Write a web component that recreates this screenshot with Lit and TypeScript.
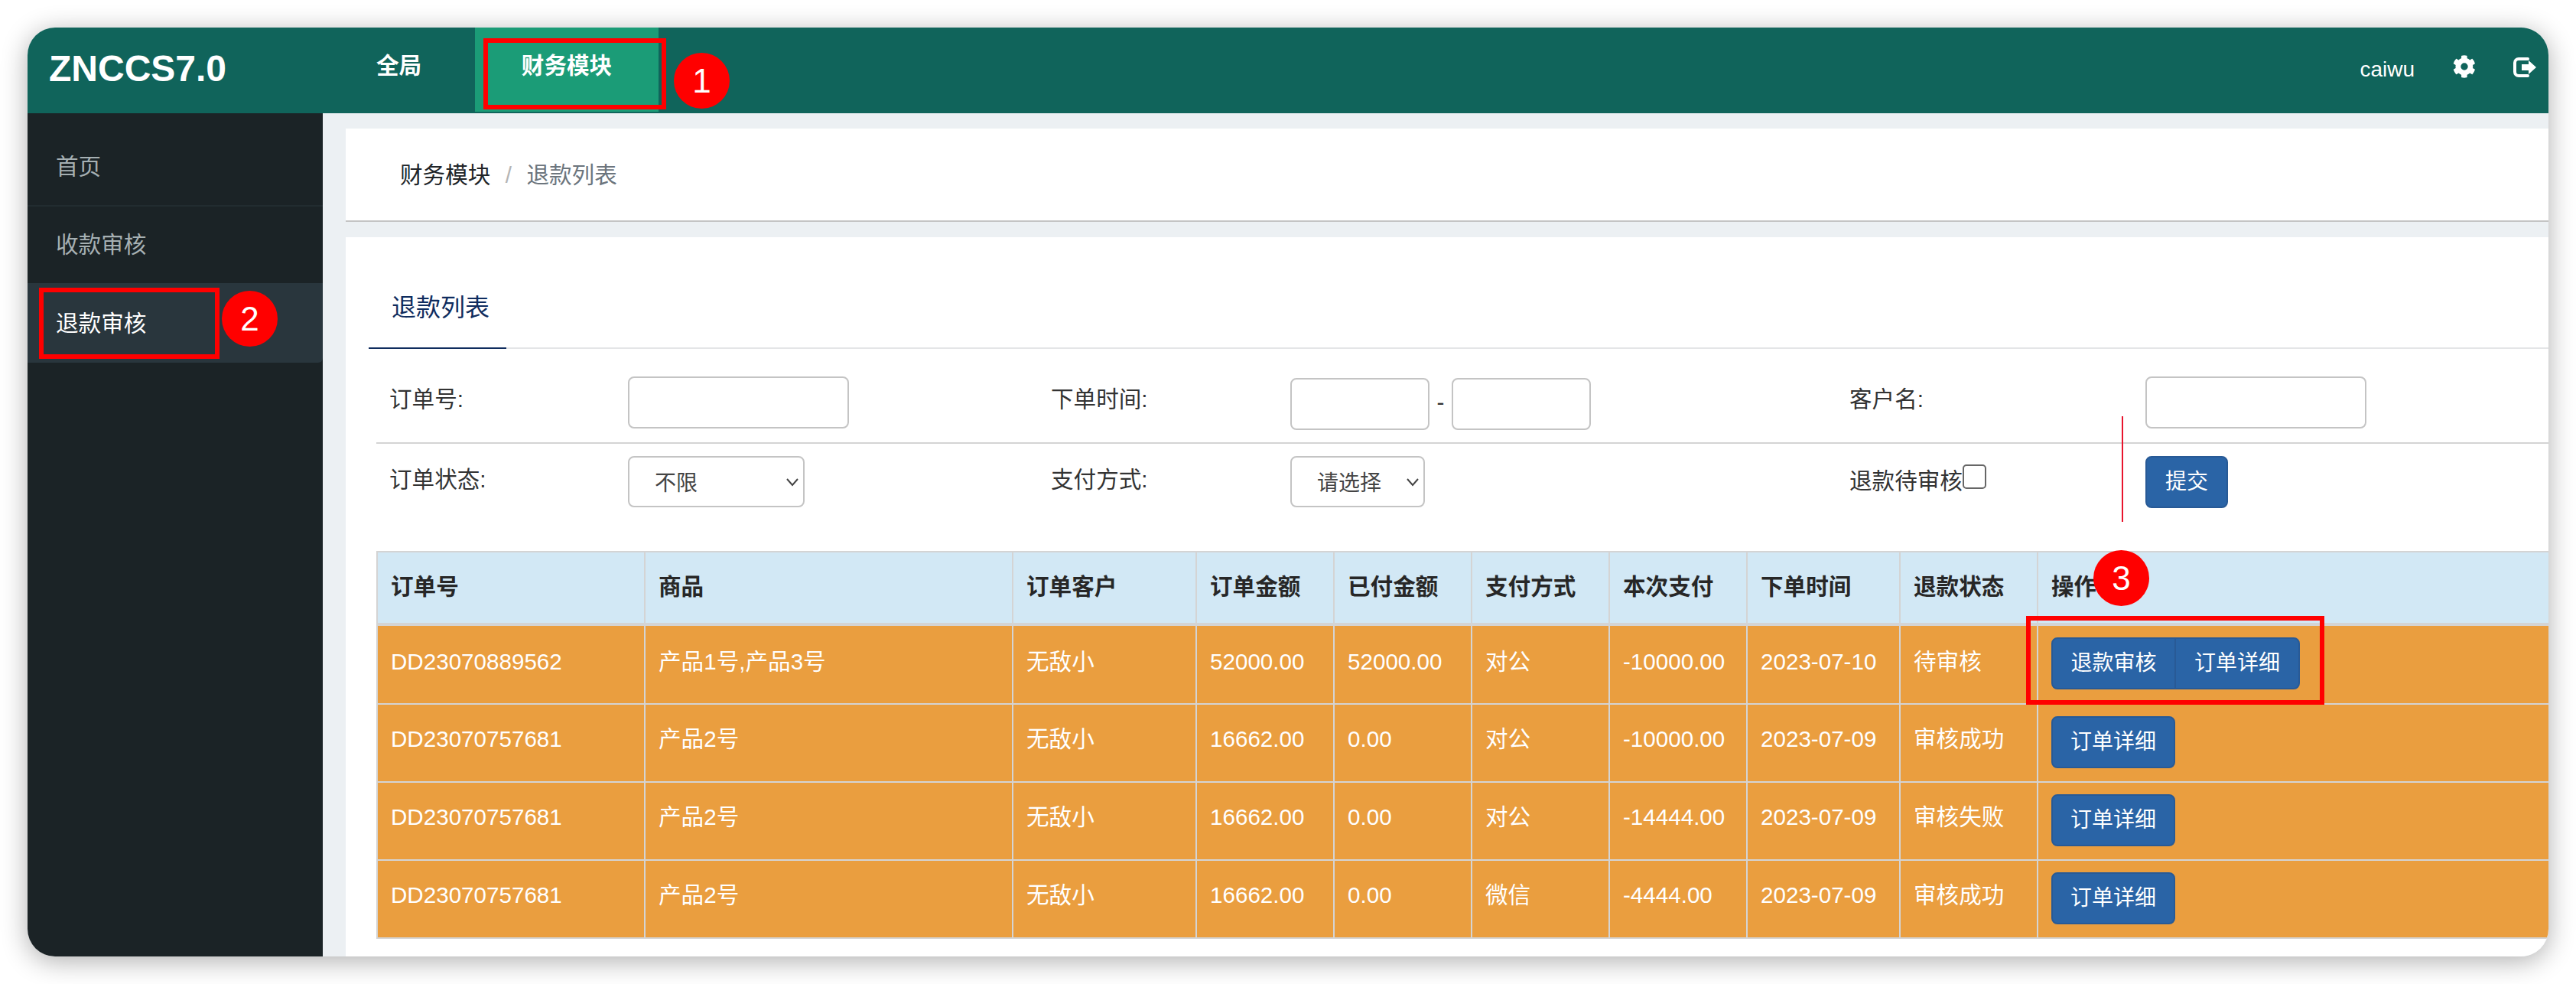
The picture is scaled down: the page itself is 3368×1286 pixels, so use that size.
import { html, LitElement, css } from "lit";
import { customElement } from "lit/decorators.js";

const rows = [
  { id: "DD23070889562", goods: "产品1号,产品3号", total: "52000.00", paid: "52000.00", way: "对公", cur: "-10000.00", date: "2023-07-10", status: "待审核", audit: true },
  { id: "DD23070757681", goods: "产品2号", total: "16662.00", paid: "0.00", way: "对公", cur: "-10000.00", date: "2023-07-09", status: "审核成功", audit: false },
  { id: "DD23070757681", goods: "产品2号", total: "16662.00", paid: "0.00", way: "对公", cur: "-14444.00", date: "2023-07-09", status: "审核失败", audit: false },
  { id: "DD23070757681", goods: "产品2号", total: "16662.00", paid: "0.00", way: "微信", cur: "-4444.00", date: "2023-07-09", status: "审核成功", audit: false },
];

const heads = ["订单号", "商品", "订单客户", "订单金额", "已付金额", "支付方式", "本次支付", "下单时间", "退款状态", "操作"];

@customElement("app-root")
export class App extends LitElement {
  static styles = css`
    :host {
      display: block;
      width: 3368px;
      height: 1286px;
      background: #fff;
      font-family: "Liberation Sans", "Noto Sans CJK SC", sans-serif;
      font-size: 29.6px;
      color: #333;
      position: relative;
      overflow: hidden;
    }

    .shell {
      padding: 36px;
      box-sizing: border-box;
      height: 1286px;
    }

    .window {
      height: 1214px;
      border-radius: 36px;
      box-shadow: 0 6px 34px rgba(0, 0, 0, 0.32);
      overflow: hidden;
      display: flex;
      flex-direction: column;
      background: #ecf0f3;
    }

    .top {
      height: 112px;
      flex: none;
      background: #10645b;
      display: flex;
      color: #fff;
    }

    .logo {
      width: 456px;
      box-sizing: border-box;
      padding: 25px 0 0 28px;
      font-size: 48px;
      font-weight: 700;
      line-height: 58px;
    }

    .tab {
      height: 110px;
      width: 240px;
      box-sizing: border-box;
      text-align: center;
      font-weight: 700;
      line-height: 100px;
    }

    .tab.first {
      width: 129px;
      text-align: left;
    }

    .tab.on {
      background: #1b9c77;
    }

    .user {
      margin-left: auto;
      display: flex;
      align-items: center;
      height: 110px;
      padding-right: 16px;
    }

    .user span {
      font-size: 28px;
      margin-right: 50px;
    }

    .user svg {
      display: block;
    }

    .gear {
      width: 30px;
      height: 30px;
      margin-right: 49px;
      margin-top: -8px;
      fill: #fff;
    }

    .exit {
      width: 30px;
      height: 26px;
      margin-top: -7px;
    }

    .body {
      flex: 1;
      display: flex;
      min-height: 0;
    }

    .side {
      width: 386px;
      flex: none;
      background: #1b2326;
      color: #a6b0b3;
    }

    .side div {
      height: 120px;
      line-height: 140px;
      padding-left: 37px;
      border-bottom: 2px solid #222c30;
    }

    .side div:nth-child(2) {
      height: 100px;
      line-height: 100px;
      border-bottom: 0;
    }

    .side div.on {
      height: 104px;
      line-height: 106px;
      background: #29363d;
      color: #fff;
      border-bottom: 0;
      border-radius: 0 0 6px 0;
    }

    main {
      flex: 1;
      min-width: 0;
      padding: 20px 0 0 30px;
      display: flex;
      flex-direction: column;
      gap: 20px;
    }

    .crumb {
      height: 120px;
      flex: none;
      background: #fff;
      border-bottom: 2px solid #c4c4c4;
      padding-left: 71px;
      line-height: 122px;
      display: flex;
      color: #6c757d;
    }

    .crumb b {
      font-weight: 400;
      color: #212529;
    }

    .crumb i {
      font-style: normal;
      color: #b5b5b5;
      width: 47px;
      text-align: center;
    }

    .card {
      flex: 1;
      background: #fff;
      min-height: 0;
      overflow: hidden;
      padding-left: 30px;
    }

    .tabs {
      height: 146px;
      box-sizing: border-box;
      border-bottom: 2px solid #e4e5e7;
      display: flex;
      align-items: flex-end;
    }

    .tabs span {
      width: 180px;
      box-sizing: border-box;
      height: 146px;
      margin-bottom: -2px;
      border-bottom: 2px solid #0f2c5e;
      color: #0f2c5e;
      font-size: 32px;
      padding: 70px 0 0 30px;
      line-height: 44px;
    }

    .filters {
      margin-left: 10px;
      display: grid;
      grid-template-columns: 329px 553px 313px 731px 387px 1fr;
      grid-template-rows: 124px 140px;
    }

    .cell {
      padding-top: 46px;
      line-height: 40px;
      border-bottom: 2px solid #d4d4d4;
      box-sizing: border-box;
      white-space: nowrap;
    }

    .cell.first {
      padding-left: 17px;
    }

    .cell.box {
      padding-top: 36px;
      display: flex;
      align-items: flex-start;
    }

    .low {
      border-bottom: 0;
      padding-top: 27px;
    }

    .cell.box.low {
      padding-top: 16px;
    }

    .check {
      display: inline-flex;
      align-items: flex-start;
      padding-top: 2px;
    }

    .check em {
      display: block;
      width: 31px;
      height: 32px;
      box-sizing: border-box;
      border: 2px solid #666;
      border-radius: 5px;
      margin-top: -2px;
      background: #fff;
    }

    .input {
      width: 289px;
      height: 68px;
      box-sizing: border-box;
      border: 2px solid #c4c4c4;
      border-radius: 8px;
      background: #fff;
    }

    .input.date {
      width: 182px;
      margin-top: 2px;
    }

    .dash {
      width: 29px;
      text-align: center;
      line-height: 68px;
    }

    .pick {
      height: 67px;
      box-sizing: border-box;
      border: 2px solid #c4c4c4;
      border-radius: 8px;
      padding-left: 33px;
      font-size: 28px;
      line-height: 67px;
      color: #444;
      position: relative;
    }

    .pick svg {
      position: absolute;
      top: 26px;
      right: 5px;
      width: 18px;
      height: 12px;
      fill: none;
      stroke: #444;
      stroke-width: 2;
    }

    .pick.state {
      width: 231px;
    }

    .pick.way {
      width: 176px;
    }

    .btn {
      display: inline-block;
      height: 68px;
      box-sizing: border-box;
      background: #2a64a6;
      border: 2px solid #285a96;
      border-radius: 8px;
      color: #fff;
      font-size: 28px;
      line-height: 64px;
      text-align: center;
      vertical-align: top;
    }

    .submit {
      width: 108px;
    }

    table {
      margin-left: 10px;
      border-collapse: collapse;
      table-layout: fixed;
      width: 2900px;
    }

    th,
    td {
      border: 2px solid #d4d4d4;
      padding: 0 0 0 17px;
      text-align: left;
      vertical-align: top;
      white-space: nowrap;
      box-sizing: border-box;
    }

    th {
      background: #d2e8f5;
      border-bottom-width: 4px;
      height: 95px;
      font-weight: 700;
      line-height: 90px;
      color: #272727;
    }

    td {
      background: #ea9e3f;
      color: #fff;
      height: 102px;
      line-height: 44px;
      padding-top: 23px;
    }

    tbody tr:first-child td {
      height: 104px;
      padding-top: 25px;
    }

    td.ops,
    tbody tr:first-child td.ops {
      padding-top: 15px;
      line-height: 0;
    }

    .group {
      display: inline-flex;
    }

    .group .btn:first-child {
      width: 162px;
      border-radius: 8px 0 0 8px;
      border-right: 1px solid #285a96;
    }

    .group .btn:last-child {
      width: 163px;
      border-radius: 0 8px 8px 0;
      border-left: 1px solid #285a96;
    }

    .detail {
      width: 162px;
    }

    .divider {
      position: absolute;
      left: 2774px;
      top: 544px;
      width: 2px;
      height: 138px;
      background: #e8142c;
    }

    .mark {
      position: absolute;
      box-sizing: border-box;
      border: 6px solid #f00;
    }

    .pin {
      position: absolute;
      width: 73px;
      height: 73px;
      border-radius: 50%;
      background: #f00;
      color: #fff;
      font-size: 44px;
      line-height: 73px;
      text-align: center;
    }
  `;

  render() {
    return html`
      <div class="shell">
        <div class="window">
          <header class="top">
            <div class="logo">ZNCCS7.0</div>
            <div class="tab first">全局</div>
            <div class="tab on">财务模块</div>
            <div class="user">
              <span>caiwu</span>
              <svg class="gear" viewBox="0 0 512 512"><path d="M487 316l-43-25a196 196 0 0 0 0-70l43-25c5-3 7-9 5-14a252 252 0 0 0-55-96c-4-4-10-5-15-2l-43 25a193 193 0 0 0-61-35V24c0-6-4-10-9-12a254 254 0 0 0-111 0c-5 1-9 6-9 12v50a199 199 0 0 0-61 35L85 84c-5-3-11-2-15 2a250 250 0 0 0-55 96c-2 5 0 11 5 14l43 25a196 196 0 0 0 0 70l-43 25c-5 3-7 9-5 14a252 252 0 0 0 55 96c4 4 10 5 15 2l43-25a193 193 0 0 0 61 35v50c0 6 4 10 9 12a254 254 0 0 0 111 0c5-1 9-6 9-12v-50a199 199 0 0 0 61-35l43 25c5 3 11 2 15-2a250 250 0 0 0 55-96c2-5 0-11-5-14zM256 336a80 80 0 1 1 0-160 80 80 0 0 1 0 160z"/></svg>
              <svg class="exit" viewBox="0 0 30 26"><path d="M19 2H7a5 5 0 0 0-5 5v12a5 5 0 0 0 5 5h12" fill="none" stroke="#fff" stroke-width="4" stroke-linecap="round"/><path d="M11 9h9V4l10 9-10 9v-5h-9z" fill="#fff"/></svg>
            </div>
          </header>
          <div class="body">
            <nav class="side">
              <div>首页</div>
              <div>收款审核</div>
              <div class="on">退款审核</div>
            </nav>
            <main>
              <div class="crumb"><b>财务模块</b><i>/</i><span>退款列表</span></div>
              <section class="card">
                <div class="tabs"><span>退款列表</span></div>
                <div class="filters">
                  <div class="cell first">订单号:</div>
                  <div class="cell box"><div class="input"></div></div>
                  <div class="cell">下单时间:</div>
                  <div class="cell box"><div class="input date"></div><div class="dash">-</div><div class="input date"></div></div>
                  <div class="cell">客户名:</div>
                  <div class="cell box"><div class="input"></div></div>
                  <div class="cell first low">订单状态:</div>
                  <div class="cell box low">
                    <div class="pick state">不限<svg viewBox="0 0 18 12"><path d="M2 2l7 8 7-8"/></svg></div>
                  </div>
                  <div class="cell low">支付方式:</div>
                  <div class="cell box low">
                    <div class="pick way">请选择<svg viewBox="0 0 18 12"><path d="M2 2l7 8 7-8"/></svg></div>
                  </div>
                  <div class="cell low"><span class="check">退款待审核<em></em></span></div>
                  <div class="cell box low"><span class="btn submit">提交</span></div>
                </div>
                <table>
                  <colgroup>
                    <col style="width:350px" /><col style="width:481px" /><col style="width:240px" />
                    <col style="width:180px" /><col style="width:180px" /><col style="width:180px" />
                    <col style="width:180px" /><col style="width:200px" /><col style="width:180px" />
                    <col style="width:729px" />
                  </colgroup>
                  <thead>
                    <tr>${heads.map((h) => html`<th>${h}</th>`)}</tr>
                  </thead>
                  <tbody>
                    ${rows.map(
                      (r) => html`<tr>
                        <td>${r.id}</td>
                        <td>${r.goods}</td>
                        <td>无敌小</td>
                        <td>${r.total}</td>
                        <td>${r.paid}</td>
                        <td>${r.way}</td>
                        <td>${r.cur}</td>
                        <td>${r.date}</td>
                        <td>${r.status}</td>
                        <td class="ops">
                          ${r.audit
                            ? html`<span class="group"><span class="btn">退款审核</span><span class="btn">订单详细</span></span>`
                            : html`<span class="btn detail">订单详细</span>`}
                        </td>
                      </tr>`
                    )}
                  </tbody>
                </table>
              </section>
            </main>
          </div>
        </div>
      </div>
      <div class="divider"></div>
      <div class="mark" style="left:632px;top:50px;width:239px;height:93px"></div>
      <div class="mark" style="left:51px;top:376px;width:236px;height:93px"></div>
      <div class="mark" style="left:2649px;top:805px;width:390px;height:116px"></div>
      <div class="pin" style="left:881px;top:69px">1</div>
      <div class="pin" style="left:290px;top:380px">2</div>
      <div class="pin" style="left:2737px;top:719px">3</div>
    `;
  }
}
